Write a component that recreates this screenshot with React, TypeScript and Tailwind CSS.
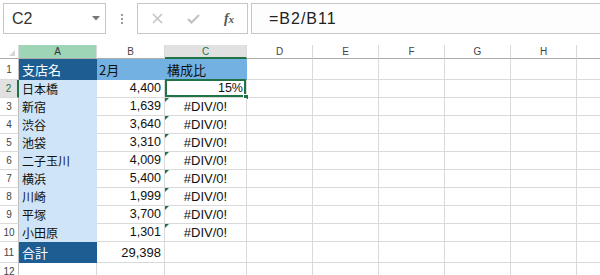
import React from "react";

const LAT = "font-['Liberation_Sans',Arial,sans-serif]";
const CJK = "font-['Noto_Sans_CJK_JP','Noto_Sans',sans-serif]";

const rows: { name: string; val: string; c: string }[] = [
  { name: "日本橋", val: "4,400", c: "15%" },
  { name: "新宿", val: "1,639", c: "#DIV/0!" },
  { name: "渋谷", val: "3,640", c: "#DIV/0!" },
  { name: "池袋", val: "3,310", c: "#DIV/0!" },
  { name: "二子玉川", val: "4,009", c: "#DIV/0!" },
  { name: "横浜", val: "5,400", c: "#DIV/0!" },
  { name: "川崎", val: "1,999", c: "#DIV/0!" },
  { name: "平塚", val: "3,700", c: "#DIV/0!" },
  { name: "小田原", val: "1,301", c: "#DIV/0!" },
];

const emptyCols = ["D", "E", "F", "G", "H", ""];

function Empty() {
  return <div className="border-r border-b border-[#dadada]" />;
}

function RowHead({ n, active }: { n: number; active?: boolean }) {
  return active ? (
    <div className={`border-b border-b-[#dadada] border-r-2 border-r-[#217346] bg-[#e1e1e1] text-[#217346] text-[10px] flex items-center justify-center ${LAT}`}>
      {n}
    </div>
  ) : (
    <div className={`border-b border-b-[#dadada] border-r border-r-[#bdbdbd] bg-white text-[#444] text-[10px] flex items-center justify-center ${LAT}`}>
      {n}
    </div>
  );
}

function ErrTri() {
  return (
    <div className="absolute left-0 top-0 w-0 h-0 border-t-[4px] border-r-[4px] border-t-[#217346] border-r-transparent" />
  );
}

export default function App() {
  return (
    <div className="w-[600px] h-[275px] overflow-hidden bg-white">
      {/* Top bar */}
      <div className="h-[45px] flex items-start pt-[3px] pl-[3px]">
        <div className="w-[103px] h-[31px] border border-[#c6c6c6] bg-white flex items-center justify-between pl-[8px] pr-[5px]">
          <span className={`text-[16px] text-[#333] leading-none ${LAT}`}>C2</span>
          <svg width="8" height="5" viewBox="0 0 8 5">
            <polygon points="0,0 8,0 4,4.5" fill="#777" />
          </svg>
        </div>
        <div className="w-[31px] h-[31px] flex flex-col items-center justify-center gap-[2px]">
          <div className="w-[2px] h-[2px] bg-[#9a9a9a]" />
          <div className="w-[2px] h-[2px] bg-[#9a9a9a]" />
          <div className="w-[2px] h-[2px] bg-[#9a9a9a]" />
        </div>
        <div className="w-[111px] h-[31px] border border-[#c6c6c6] bg-white flex items-center pl-[1px]">
          <div className="w-[36px] flex justify-center">
            <svg width="11" height="11" viewBox="0 0 11 11">
              <path d="M1 1 L10 10 M10 1 L1 10" stroke="#c2c2c2" strokeWidth="1.5" fill="none" />
            </svg>
          </div>
          <div className="w-[36px] flex justify-center">
            <svg width="13" height="10" viewBox="0 0 13 10">
              <path d="M1 5 L4.5 8.5 L12 1" stroke="#c2c2c2" strokeWidth="2.2" fill="none" />
            </svg>
          </div>
          <div className="w-[36px] flex justify-center">
            <span className="font-['Liberation_Serif',serif] italic font-bold text-[14px] text-[#555] leading-none">
              f<span className="text-[11px]">x</span>
            </span>
          </div>
        </div>
        <div className="ml-[3px] flex-1 -mr-[10px] h-[31px] border border-[#c6c6c6] bg-[#fdfdfd] flex items-center pl-[17px]">
          <span className={`text-[16px] text-[#222] tracking-[1px] leading-none ${LAT}`}>=B2/B11</span>
        </div>
      </div>

      {/* Grid */}
      <div className="grid grid-cols-[19px_78px_68px_82px_66px_66px_66px_66px_66px_66px] grid-rows-[14px_21px_18px_18px_18px_18px_18px_18px_18px_18px_18px_21px_18px]">
        {/* Header row */}
        <div className="border-b border-b-[#ababab] border-r border-r-[#dadada] bg-white flex items-end justify-end pr-[3px] pb-[2px]">
          <svg width="6" height="6" viewBox="0 0 6 6">
            <polygon points="6,0 6,6 0,6" fill="#d6d6d6" />
          </svg>
        </div>
        <div className={`border-b border-b-[#ababab] border-r border-r-[#dadada] bg-[#9fd5b7] text-[#333] text-[10px] flex items-center justify-center ${LAT}`}>A</div>
        <div className={`border-b border-b-[#ababab] border-r border-r-[#dadada] bg-white text-[#444] text-[10px] flex items-center justify-center ${LAT}`}>B</div>
        <div className={`border-b-2 border-b-[#217346] border-r border-r-[#dadada] bg-[#e1e1e1] text-[#217346] text-[10px] flex items-center justify-center ${LAT}`}>C</div>
        {emptyCols.map((c, i) => (
          <div key={i} className={`border-b border-b-[#ababab] border-r border-r-[#dadada] bg-white text-[#444] text-[10px] flex items-center justify-center ${LAT}`}>{c}</div>
        ))}

        {/* Row 1 */}
        <RowHead n={1} />
        <div className={`border-r border-b border-[#1d5d92] bg-[#1d5d92] text-white text-[13px] leading-none flex items-center pl-[3px] ${CJK}`}>支店名</div>
        <div className={`border-r border-b border-[#72b1e2] bg-[#72b1e2] text-[#111] text-[13px] leading-none flex items-center pl-[2px] ${CJK}`}>2月</div>
        <div className={`border-r border-b border-[#72b1e2] bg-[#72b1e2] text-[#111] text-[13px] leading-none flex items-center pl-[2px] ${CJK}`}>構成比</div>
        {emptyCols.map((c, i) => <Empty key={i} />)}

        {/* Rows 2-10 */}
        {rows.map((r, i) => (
          <React.Fragment key={r.name}>
            <RowHead n={i + 2} active={i === 0} />
            <div className={`border-r border-b border-[#cfe4f6] bg-[#cfe4f6] text-[#111] text-[12px] leading-none flex items-center pl-[3px] ${CJK}`}>{r.name}</div>
            <div className={`border-r border-b border-[#dadada] bg-white text-[#111] text-[12.5px] leading-none flex items-center justify-end pr-[3px] ${LAT}`}>{r.val}</div>
            {i === 0 ? (
              <div className={`relative border-r border-b border-[#dadada] bg-white text-[#111] text-[12.5px] leading-none flex items-center justify-end pr-[3px] ${LAT}`}>
                {r.c}
                <div className="absolute -top-[1px] left-0 right-0 bottom-0 border-2 border-[#217346]" />
                <div className="absolute -right-[3px] -bottom-[3px] w-[6px] h-[6px] bg-[#217346] border border-white" />
              </div>
            ) : (
              <div className={`relative border-r border-b border-[#dadada] bg-white text-[#111] text-[13px] leading-none flex items-center justify-center ${LAT}`}>
                <ErrTri />
                {r.c}
              </div>
            )}
            {emptyCols.map((c, j) => <Empty key={j} />)}
          </React.Fragment>
        ))}

        {/* Row 11 */}
        <RowHead n={11} />
        <div className={`border-r border-b border-[#1d5d92] bg-[#1d5d92] text-white text-[13px] leading-none flex items-center pl-[3px] ${CJK}`}>合計</div>
        <div className={`border-r border-b border-[#dadada] bg-white text-[#111] text-[13px] leading-none flex items-center justify-end pr-[3px] ${LAT}`}>29,398</div>
        <Empty />
        {emptyCols.map((c, i) => <Empty key={i} />)}

        {/* Row 12 */}
        <RowHead n={12} />
        <Empty />
        <Empty />
        <Empty />
        {emptyCols.map((c, i) => <Empty key={i} />)}
      </div>
    </div>
  );
}
